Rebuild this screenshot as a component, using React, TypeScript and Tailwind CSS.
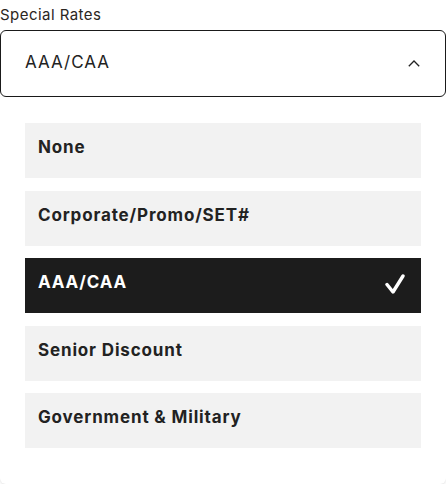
import React from "react";

const options = [
  "None",
  "Corporate/Promo/SET#",
  "AAA/CAA",
  "Senior Discount",
  "Government & Military",
];

export default function App() {
  const selected = "AAA/CAA";
  return (
    <div
      className="w-[446px] h-[484px] bg-white overflow-hidden"
      style={{ fontFamily: 'Inter, "Liberation Sans", sans-serif' }}
    >
      <div className="h-[30px] pt-[4px] text-[15px] leading-[22px] tracking-[0.45px] text-[#2b2622]">
        Special Rates
      </div>
      <div className="h-[67px] border border-[#1a1a1a] rounded-[6px] flex items-center justify-between pl-[24px] pr-[25px]">
        <span className="text-[17px] tracking-[1px] text-[#222] pb-[2px]">AAA/CAA</span>
        <svg width="12" height="7" viewBox="0 0 12 7" fill="none">
          <path d="M0.8 6.2 L6 1 L11.2 6.2" stroke="#222" strokeWidth="1.3" />
        </svg>
      </div>
      <div className="rounded-b-[6px] shadow-[0_1px_3px_rgba(0,0,0,0.12)] pt-[26px] pb-[36px] px-[25px] flex flex-col gap-[12.5px]">
        {options.map((o) => {
          const isSel = o === selected;
          return (
            <div
              key={o}
              className={
                isSel
                  ? "h-[55px] bg-[#1c1c1c] text-white flex items-center justify-between pl-[13px] pr-[16px]"
                  : "h-[55px] bg-[#f2f2f2] text-[#222] flex items-center justify-between pl-[13px] pr-[16px]"
              }
            >
              <span className="text-[17px] font-bold tracking-[0.85px] pb-[5px]">{o}</span>
              {isSel && (
                <svg width="20" height="21" viewBox="0 0 20 21" fill="none" className="mb-[2px]">
                  <path
                    d="M2 10.5 L8 18 L18 2"
                    stroke="white"
                    strokeWidth="3.4"
                    strokeLinecap="round"
                    strokeLinejoin="round"
                  />
                </svg>
              )}
            </div>
          );
        })}
      </div>
    </div>
  );
}
